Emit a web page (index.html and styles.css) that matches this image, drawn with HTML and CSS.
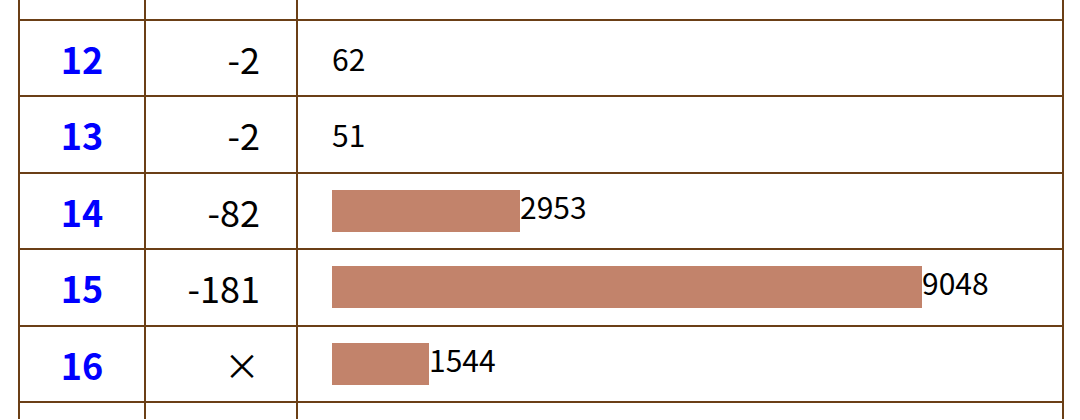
FILE: index.html
```html
<!DOCTYPE html>
<html lang="ja">
<head>
	<meta charset="UTF-8">
	<title>ランキング</title>
	<link rel="stylesheet" href="styles.css">
</head>
<body>
	<table class="rank">
		<colgroup>
			<col class="c-idx">
			<col class="c-diff">
			<col class="c-val">
		</colgroup>
		<tr class="cut top"><td></td><td></td><td></td></tr>
		<tr>
			<td class="idx">12</td>
			<td class="diff">-2</td>
			<td class="val">62</td>
		</tr>
		<tr>
			<td class="idx">13</td>
			<td class="diff">-2</td>
			<td class="val">51</td>
		</tr>
		<tr>
			<td class="idx">14</td>
			<td class="diff">-82</td>
			<td class="val"><span class="bar" style="width: 188px"></span>2953</td>
		</tr>
		<tr>
			<td class="idx">15</td>
			<td class="diff">-181</td>
			<td class="val"><span class="bar" style="width: 590px"></span>9048</td>
		</tr>
		<tr>
			<td class="idx">16</td>
			<td class="diff">×</td>
			<td class="val"><span class="bar" style="width: 97px"></span>1544</td>
		</tr>
		<tr class="cut bottom"><td></td><td></td><td></td></tr>
	</table>
</body>
</html>
```

FILE: styles.css
```css
html, body {
	margin: 0;
	padding: 0;
	background: #fff;
	overflow: hidden;
}
body {
	font-family: "Noto Sans CJK JP", "Noto Sans", sans-serif;
	color: #000;
}
table.rank {
	border-collapse: collapse;
	table-layout: fixed;
	width: 1044px;
	margin-left: 18px;
}
col.c-idx { width: 126px; }
col.c-diff { width: 152px; }
col.c-val { width: 766px; }

table.rank td {
	border: 2px solid #6b3f16;
	height: 74.5px;
	padding: 0;
	line-height: 1;
	vertical-align: middle;
}
table.rank tr.cut.top td {
	height: 18.5px;
	border-top: none;
}
table.rank tr.cut.bottom td {
	height: 16px;
	border-bottom: none;
}
td.idx {
	text-align: center;
	font-size: 36px;
	font-weight: bold;
	color: #0000ff;
}
td.diff {
	text-align: right;
	padding-right: 36px !important;
	font-size: 36px;
}
td.val {
	padding-left: 34px !important;
	font-size: 30px;
	white-space: nowrap;
}
td.val span.bar {
	display: inline-block;
	height: 42px;
	background-color: #c2836b;
	vertical-align: middle;
}
```
